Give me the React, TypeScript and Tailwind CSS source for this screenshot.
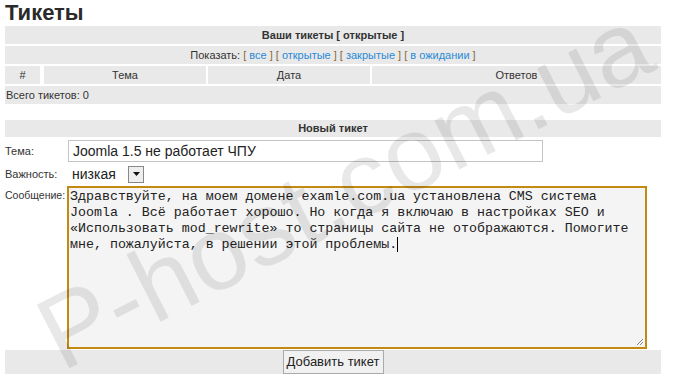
import React from "react";

const links = ["все", "открытые", "закрытые", "в ожидании"];

function Bracketed({ text }: { text: string }) {
  return (
    <span className="text-[#8a6a3a]">
      [ <a className="text-[#2a8ad6]">{text}</a> ]
    </span>
  );
}

export default function App() {
  return (
    <div className="relative w-[684px] h-[383px] overflow-hidden bg-white text-[#333] font-['Liberation_Sans',Arial,sans-serif]">
      <h1 className="pl-[5px] pt-[1px] h-[26px] text-[22px] leading-[24px] font-bold text-[#2b2b2b]">
        Тикеты
      </h1>

      {/* tickets table */}
      <div className="ml-[5px] w-[656px] flex flex-col gap-[2px] text-[11px]">
        <div className="h-[18px] bg-[#e9e9e9] flex items-center justify-center font-bold">
          Ваши тикеты [ открытые ]
        </div>
        <div className="h-[18px] bg-[#e9e9e9] flex items-center justify-center gap-[3px]">
          <span>Показать:</span>
          {links.map((l) => (
            <Bracketed key={l} text={l} />
          ))}
        </div>
        <div className="h-[18px] flex gap-[2px]">
          <div className="w-[35px] mr-[2px] bg-[#e9e9e9] flex items-center justify-center">#</div>
          <div className="w-[162px] bg-[#e9e9e9] flex items-center justify-center">Тема</div>
          <div className="w-[162px] bg-[#e9e9e9] flex items-center justify-center">Дата</div>
          <div className="flex-1 bg-[#e9e9e9] flex items-center justify-center">Ответов</div>
        </div>
        <div className="h-[18px] bg-[#e9e9e9] flex items-center pl-[1px]">Всего тикетов: 0</div>
      </div>

      {/* new ticket */}
      <div className="ml-[5px] mt-[16px] w-[656px] h-[17px] bg-[#e9e9e9] flex items-center justify-center text-[11px] font-bold">
        Новый тикет
      </div>

      <div className="mt-[3px] flex flex-col gap-[3px] text-[11px]">
        <div className="flex items-center">
          <label className="w-[68px] pl-[5px]">Тема:</label>
          <div className="w-[475px] h-[22px] border border-[#c4c4c4] bg-white flex items-center pl-[4px] text-[14px] text-[#222]">
            Joomla 1.5 не работает ЧПУ
          </div>
        </div>
        <div className="flex items-center">
          <label className="w-[68px] pl-[5px]">Важность:</label>
          <div className="w-[76px] h-[18px] flex items-center bg-white">
            <span className="flex-1 pl-[4px] text-[14px] text-[#222] leading-none">низкая</span>
            <span className="w-[16px] h-[17px] border border-[#888] bg-[#eeeeee] flex items-center justify-center">
              <svg width="7" height="4" viewBox="0 0 7 4">
                <path d="M0 0h7L3.5 4z" fill="#111" />
              </svg>
            </span>
          </div>
        </div>
        <div className="flex items-start">
          <label className="w-[67px] pl-[5px] pt-[2px] text-[10.5px]">Сообщение:</label>
          <div className="relative w-[580px] h-[163px] border-2 border-[#c38a12] bg-[#f4f4f4] px-[1px] pt-[1px] font-['Liberation_Mono','Courier_New',monospace] text-[13.3px] leading-[16px] text-[#222]">
            <p className="w-[560px]">
              Здравствуйте, на моем домене examle.com.ua установлена CMS система Joomla . Всё работает хорошо. Но когда я включаю в настройках SEO и «Использовать mod_rewrite» то страницы сайта не отображаются. Помогите мне, пожалуйста, в решении этой проблемы.
              <span className="inline-block w-px h-[15px] bg-black align-middle" />
            </p>
            <svg className="absolute right-[1px] bottom-[1px]" width="9" height="9" viewBox="0 0 9 9">
              <path d="M8 2L2 8M8 5L5 8" stroke="#888" strokeWidth="1" />
            </svg>
          </div>
        </div>
      </div>

      <div className="ml-[5px] mt-[1px] w-[656px] h-[24px] bg-[#e9e9e9] flex justify-center">
        <button className="w-[101px] h-[24px] border border-[#aaa] bg-[#f1f1f1] whitespace-nowrap text-[13px] text-[#222] font-['Liberation_Sans',Arial,sans-serif]">
          Добавить тикет
        </button>
      </div>

      {/* watermark */}
      <div className="pointer-events-none absolute left-[344px] top-[188px] -translate-x-1/2 -translate-y-1/2 -rotate-[27deg] whitespace-nowrap text-[104px] leading-none text-black/[0.09] font-['Liberation_Sans',Arial,sans-serif]">
        P-host.com.ua
      </div>
    </div>
  );
}
